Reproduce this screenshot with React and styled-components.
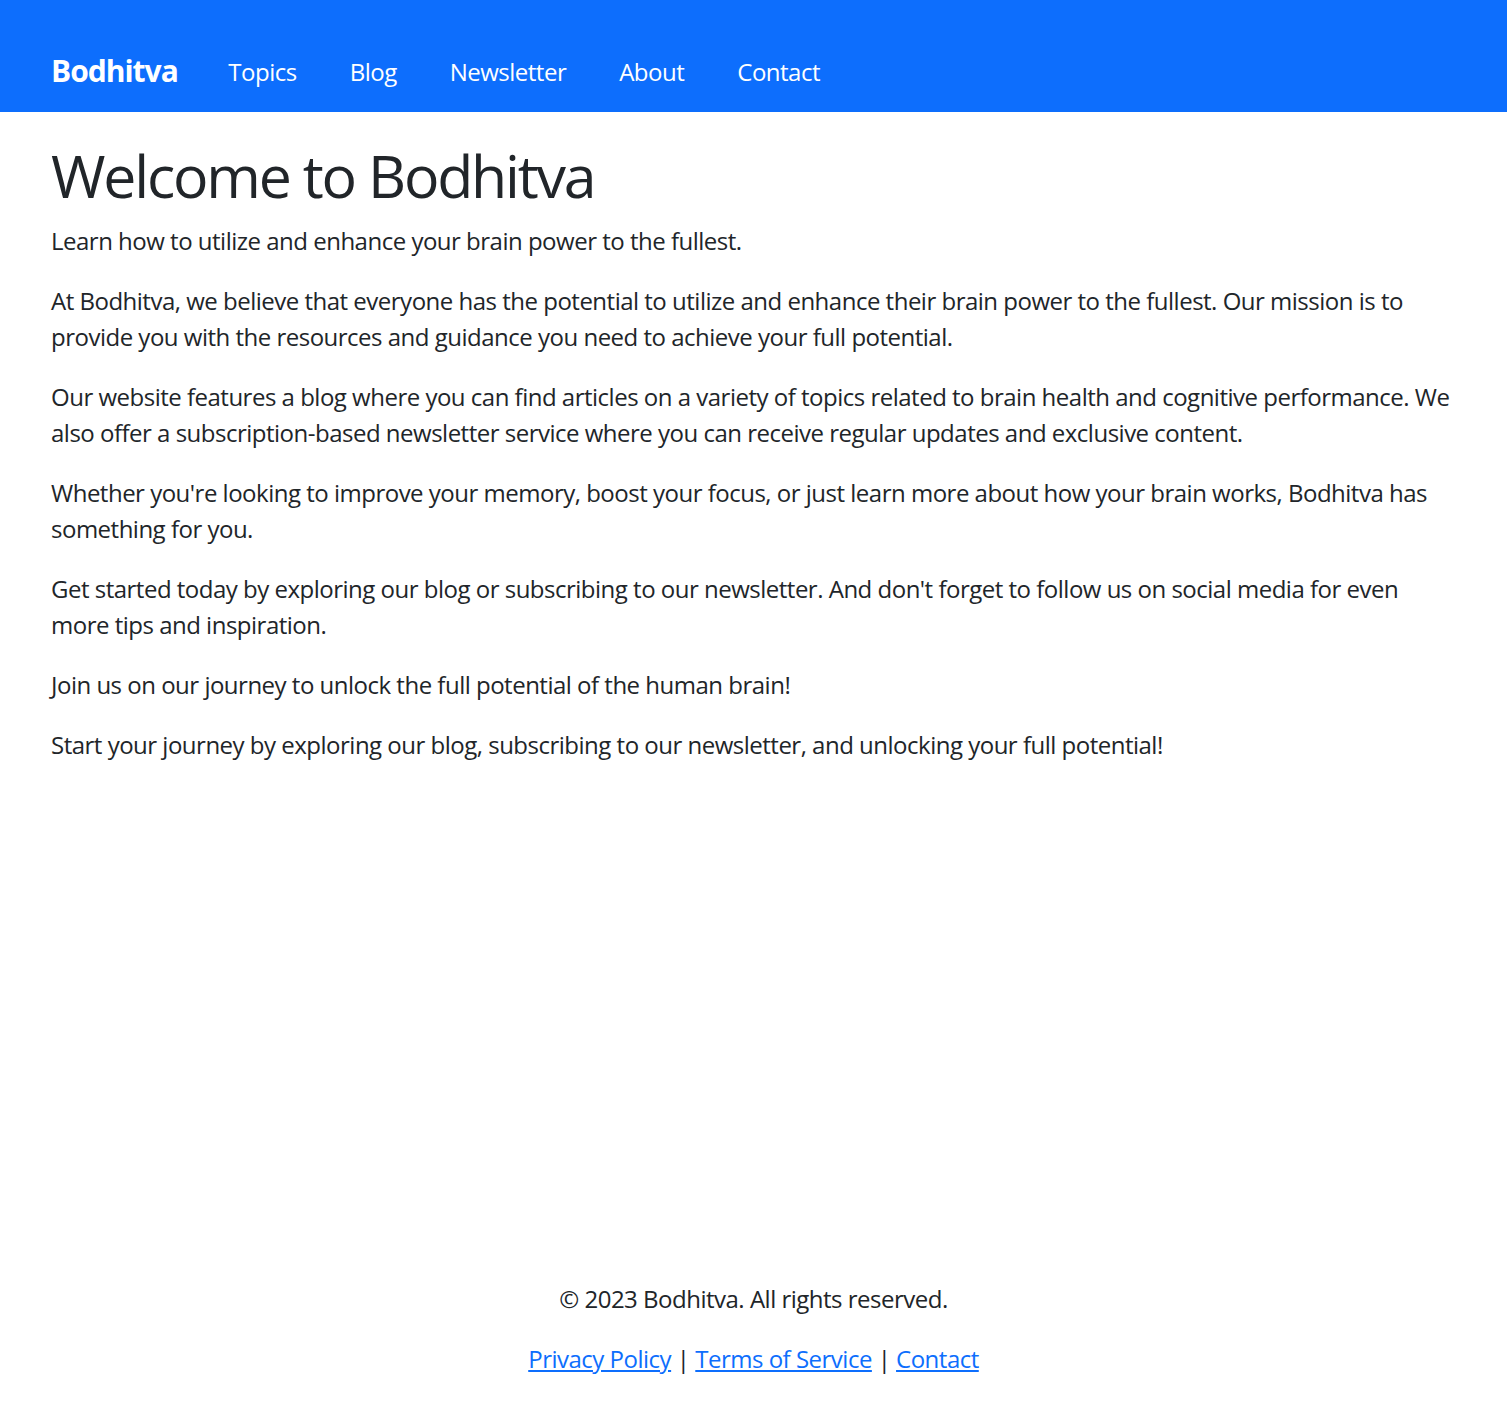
import React from 'react'
import styled, { createGlobalStyle } from 'styled-components'

const GlobalStyle = createGlobalStyle`
  * { box-sizing: border-box; }
  body {
    margin: 0;
    font-family: "Open Sans", "Noto Sans", sans-serif;
    font-size: 24px;
    line-height: 36px;
    letter-spacing: -0.5px;
    color: #212529;
    background: #fff;
  }
`

const Page = styled.div`
  min-height: 100vh;
  display: flex;
  flex-direction: column;
`

const Navbar = styled.nav`
  background: #0d6efd;
  height: 112px;
  padding: 42px 51px 10px;
  display: flex;
  align-items: center;
`

const Brand = styled.a`
  color: #fff;
  font-size: 30px;
  font-weight: 700;
  line-height: 45px;
  letter-spacing: -1px;
  margin: -3px 24px 0 0;
  text-decoration: none;
`

const NavList = styled.ul`
  display: flex;
  list-style: none;
  margin: 0;
  padding: 0;
`

const NavLink = styled.a`
  display: block;
  color: #fff;
  padding: 12px 26.5px;
  text-decoration: none;
`

const Main = styled.main`
  padding: 27px 51px 0;
`

const Title = styled.h1`
  font-size: 59px;
  font-weight: 500;
  line-height: 72px;
  letter-spacing: -2.2px;
  margin: 0 0 12px;
`

const Text = styled.p`
  margin: 0 0 24px;
`

const Footer = styled.footer`
  margin-top: auto;
  text-align: center;
  padding-bottom: 1px;
`

const FootLink = styled.a`
  color: #0d6efd;
  text-decoration: underline;
`

const links = ['Topics', 'Blog', 'Newsletter', 'About', 'Contact']

export default function App() {
  return (
    <Page>
      <GlobalStyle />
      <Navbar>
        <Brand href="#">Bodhitva</Brand>
        <NavList>
          {links.map(l => (
            <li key={l}><NavLink href="#">{l}</NavLink></li>
          ))}
        </NavList>
      </Navbar>
      <Main>
        <Title>Welcome to Bodhitva</Title>
        <Text>Learn how to utilize and enhance your brain power to the fullest.</Text>
        <Text>At Bodhitva, we believe that everyone has the potential to utilize and enhance their brain power to the fullest. Our mission is to provide you with the resources and guidance you need to achieve your full potential.</Text>
        <Text>Our website features a blog where you can find articles on a variety of topics related to brain health and cognitive performance. We also offer a subscription-based newsletter service where you can receive regular updates and exclusive content.</Text>
        <Text>Whether you're looking to improve your memory, boost your focus, or just learn more about how your brain works, Bodhitva has something for you.</Text>
        <Text>Get started today by exploring our blog or subscribing to our newsletter. And don't forget to follow us on social media for even more tips and inspiration.</Text>
        <Text>Join us on our journey to unlock the full potential of the human brain!</Text>
        <Text>Start your journey by exploring our blog, subscribing to our newsletter, and unlocking your full potential!</Text>
      </Main>
      <Footer>
        <Text>© 2023 Bodhitva. All rights reserved.</Text>
        <Text>
          <FootLink href="#">Privacy Policy</FootLink> | <FootLink href="#">Terms of Service</FootLink> | <FootLink href="#">Contact</FootLink>
        </Text>
      </Footer>
    </Page>
  )
}
